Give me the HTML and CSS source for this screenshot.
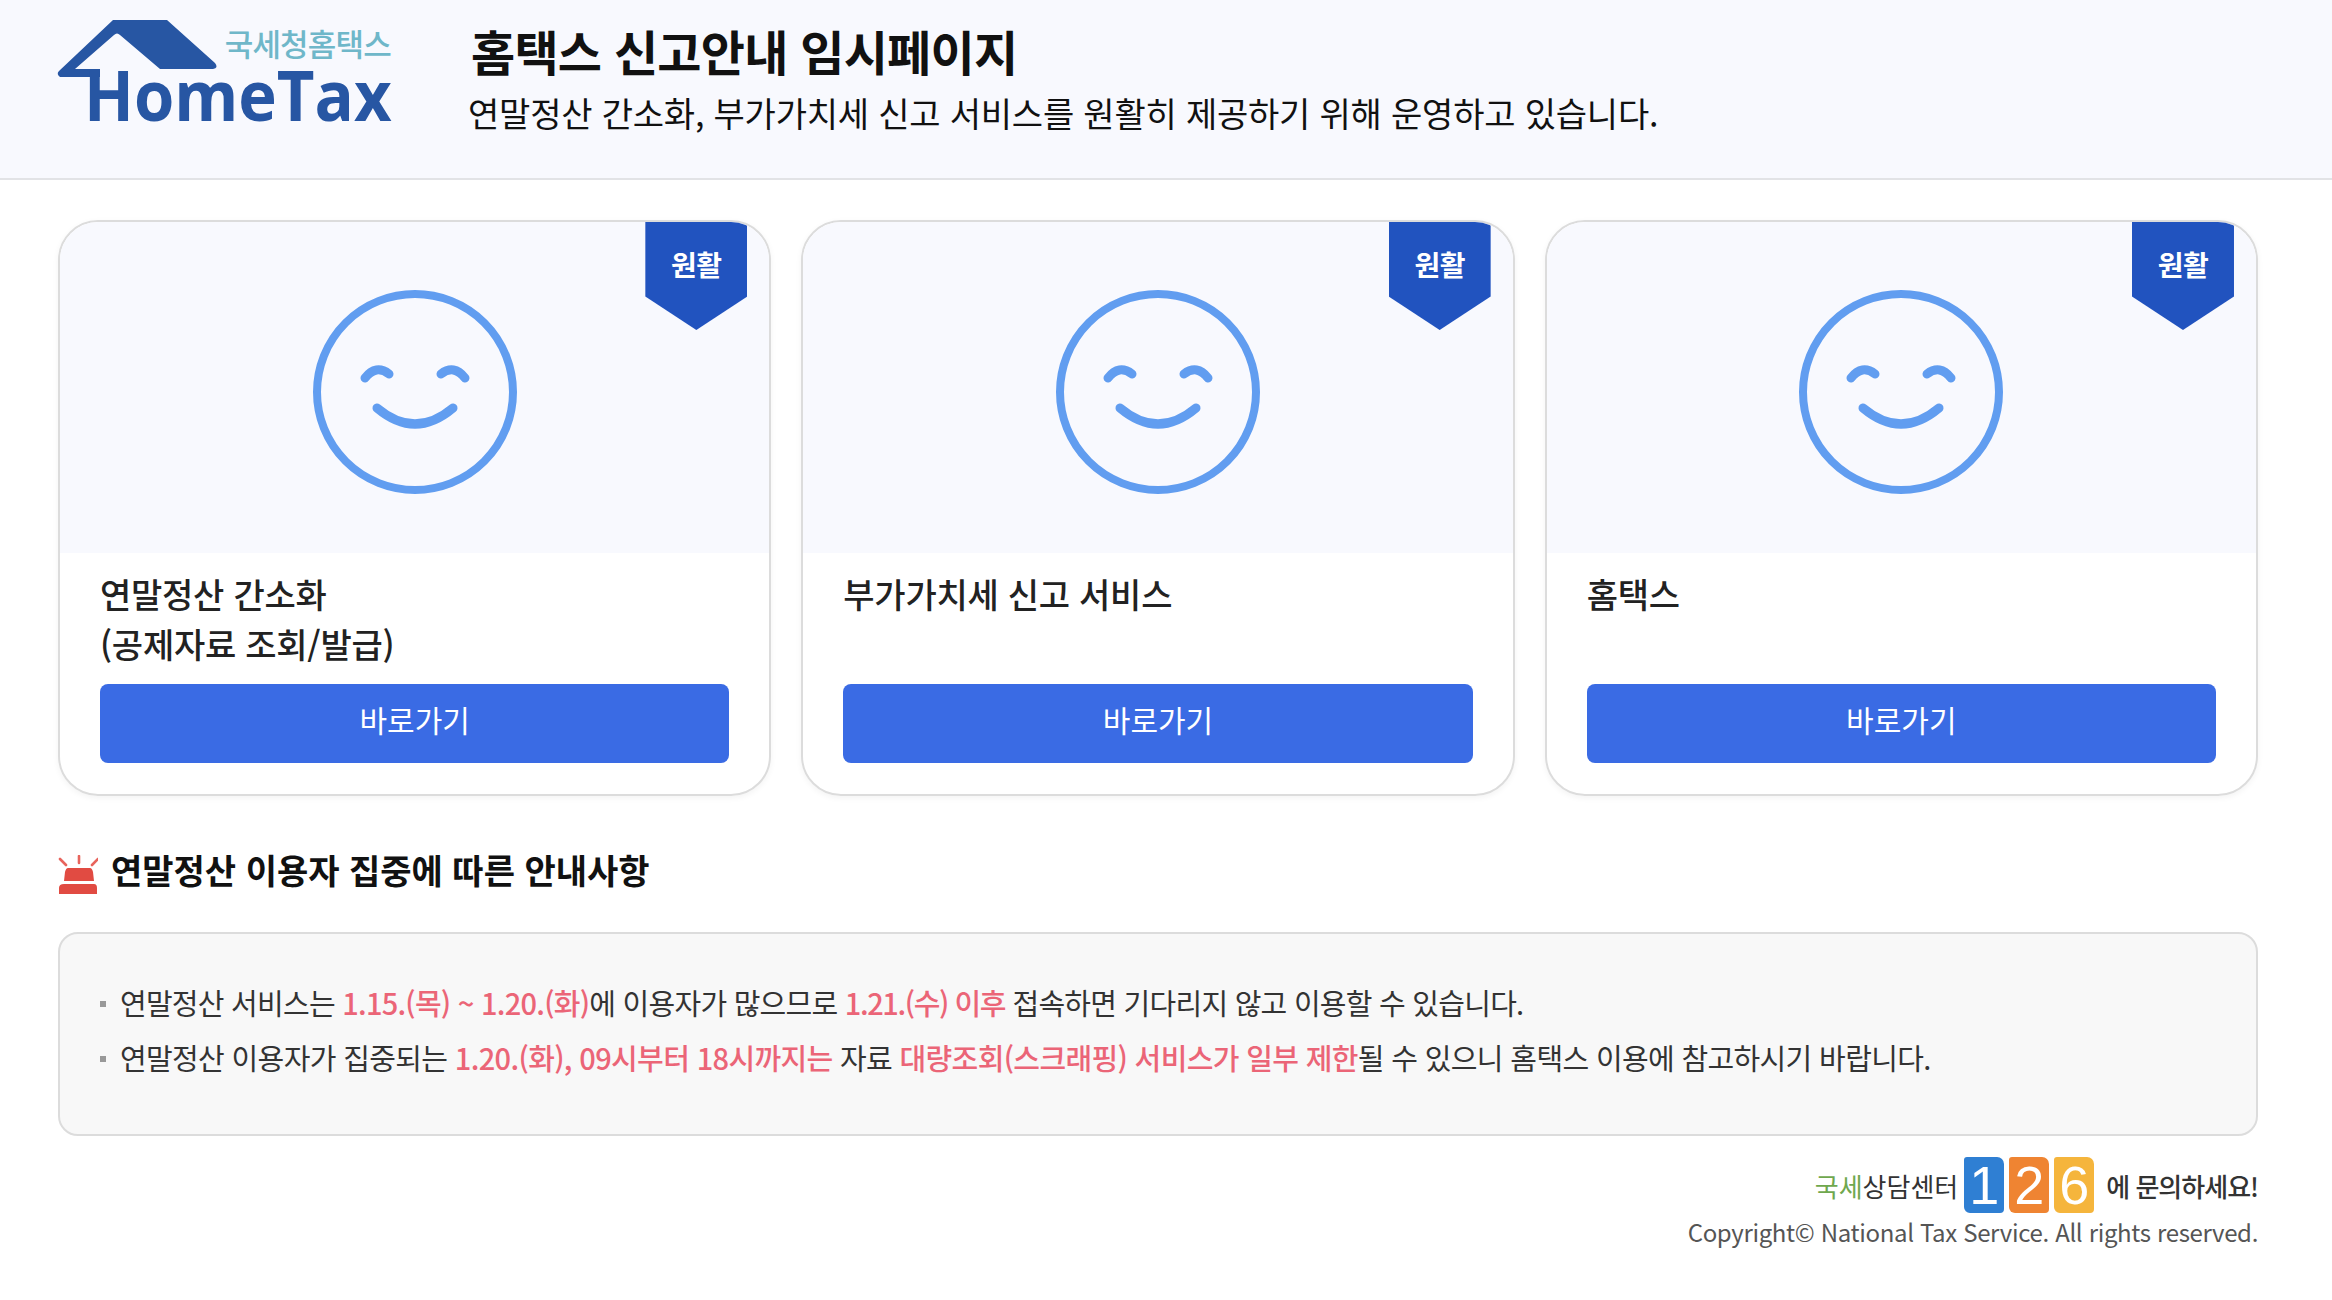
FILE: index.html
```html
<!DOCTYPE html>
<html lang="ko">
<head>
    <meta charset="UTF-8">
    <title>홈택스 신고안내 임시페이지</title>
    <link rel="stylesheet" href="styles.css">
</head>
<body>
    <header class="top">
        <div class="logo">
            <svg class="logo-roof" viewBox="0 0 160 60" width="160" height="60">
                <path d="M55 0 H109 L157 43 Q161 48 155 49 H102 L62 15 Q59 12 56 15 L17 49 H42 V57 H2 Q-2 54 1 51 Z" fill="#2756a3"/>
            </svg>
            <span class="logo-ko">국세청홈택스</span>
            <span class="logo-en">HomeTax</span>
        </div>
        <div class="top-text">
            <h1>홈택스 신고안내 임시페이지</h1>
            <p>연말정산 간소화, 부가가치세 신고 서비스를 원활히 제공하기 위해 운영하고 있습니다.</p>
        </div>
    </header>

    <main class="wrap">
        <section class="cards">
            <div class="card">
                <div class="card-top">
                    <span class="flag">원활</span>
                    <svg class="smile" viewBox="0 0 204 204" width="204" height="204">
                        <circle cx="102" cy="102" r="98" fill="none" stroke="#619df0" stroke-width="8"/>
                        <path d="M52 88 Q63 74 76 84 M128 84 Q141 74 152 88 M64 118 Q102 150 140 118" fill="none" stroke="#619df0" stroke-width="9" stroke-linecap="round"/>
                    </svg>
                </div>
                <div class="card-body">
                    <h2>연말정산 간소화<br>(공제자료 조회/발급)</h2>
                    <a class="go" href="#">바로가기</a>
                </div>
            </div>
            <div class="card">
                <div class="card-top">
                    <span class="flag">원활</span>
                    <svg class="smile" viewBox="0 0 204 204" width="204" height="204">
                        <circle cx="102" cy="102" r="98" fill="none" stroke="#619df0" stroke-width="8"/>
                        <path d="M52 88 Q63 74 76 84 M128 84 Q141 74 152 88 M64 118 Q102 150 140 118" fill="none" stroke="#619df0" stroke-width="9" stroke-linecap="round"/>
                    </svg>
                </div>
                <div class="card-body">
                    <h2>부가가치세 신고 서비스</h2>
                    <a class="go" href="#">바로가기</a>
                </div>
            </div>
            <div class="card">
                <div class="card-top">
                    <span class="flag">원활</span>
                    <svg class="smile" viewBox="0 0 204 204" width="204" height="204">
                        <circle cx="102" cy="102" r="98" fill="none" stroke="#619df0" stroke-width="8"/>
                        <path d="M52 88 Q63 74 76 84 M128 84 Q141 74 152 88 M64 118 Q102 150 140 118" fill="none" stroke="#619df0" stroke-width="9" stroke-linecap="round"/>
                    </svg>
                </div>
                <div class="card-body">
                    <h2>홈택스</h2>
                    <a class="go" href="#">바로가기</a>
                </div>
            </div>
        </section>

        <h3 class="notice-title">
            <svg class="siren" viewBox="0 0 40 40" width="40" height="40">
                <path d="M10 13 H32 Q34 13 35 17 L36 26 H6 L7 17 Q8 13 10 13 Z M6 29 H36 Q39 29 39 33 V39 H1 V33 Q1 29 6 29 Z" fill="#e14b42"/>
                <path d="M21 1 V8 M2 4 L8 10 M40 4 L34 10" stroke="#e8645c" stroke-width="2.6" fill="none" stroke-linecap="round"/>
            </svg>
            연말정산 이용자 집중에 따른 안내사항
        </h3>

        <ul class="notice">
            <li>연말정산 서비스는 <em>1.15.(목) ~ 1.20.(화)</em>에 이용자가 많으므로 <em class="tight">1.21.(수) 이후</em> 접속하면 기다리지 않고 이용할 수 있습니다.</li>
            <li>연말정산 이용자가 집중되는 <em>1.20.(화), 09시부터 18시까지는</em> 자료 <em>대량조회(스크래핑) 서비스가 일부 제한</em>될 수 있으니 홈택스 이용에 참고하시기 바랍니다.</li>
        </ul>

        <footer class="foot">
            <div class="call">
                <span class="call-name"><b>국세</b>상담센터</span>
                <span class="num num-1">1</span><span class="num num-2">2</span><span class="num num-6">6</span>
                <span class="call-text">에 문의하세요!</span>
            </div>
            <p>Copyright© National Tax Service. All rights reserved.</p>
        </footer>
    </main>
</body>
</html>
```

FILE: styles.css
```css
/* 전체 */
* {
    box-sizing: border-box;
}

body {
    margin: 0;
    background-color: #fff;
    color: #111;
    font-family: "Noto Sans CJK KR", "Noto Sans", sans-serif;
}

/* 상단 */
.top {
    display: flex;
    align-items: flex-start;
    height: 180px;
    padding: 20px 58px 0;
    background-color: #f8f9fe;
    border-bottom: 2px solid #e2e3e6;
}

.logo {
    position: relative;
    width: 334px;
    height: 110px;
    flex-shrink: 0;
}

.logo-roof {
    position: absolute;
    left: 0;
    top: 0;
    overflow: visible;
}

.logo-ko {
    position: absolute;
    right: 1px;
    top: 3px;
    color: #6fb7c9;
    font-size: 31px;
    font-weight: 500;
    letter-spacing: -0.8px;
    line-height: 40px;
}

.logo-en {
    position: absolute;
    left: 26px;
    top: 44px;
    color: #2756a3;
    font-family: "Open Sans", sans-serif;
    font-size: 69px;
    font-weight: 700;
    line-height: 60px;
    transform: scaleX(0.945);
    transform-origin: left top;
}

.top-text {
    margin-left: 79px;
}

.top-text h1 {
    margin: -3px 0 0;
    font-size: 48px;
    font-weight: 700;
    letter-spacing: -0.75px;
    line-height: 66px;
}

.top-text p {
    margin: 7px 0 0 -3px;
    font-size: 34px;
    letter-spacing: -0.2px;
    line-height: 46px;
}

.wrap {
    padding: 40px 74px 0 58px;
}

/* 카드 */
.cards {
    display: grid;
    grid-template-columns: repeat(3, 1fr);
    gap: 30px;
}

.card {
    height: 576px;
    border: 2px solid #dcdcdc;
    border-radius: 40px;
    overflow: hidden;
    box-shadow: 0 2px 6px rgba(0, 0, 0, 0.05);
}

.card-top {
    position: relative;
    display: flex;
    align-items: flex-start;
    justify-content: center;
    height: 331px;
    padding-top: 68px;
    background-color: #f8f9fe;
}

.flag {
    position: absolute;
    top: 0;
    right: 22px;
    width: 102px;
    height: 108px;
    padding-top: 22px;
    background-color: #2153bf;
    clip-path: polygon(0 0, 100% 0, 100% 69%, 50% 100%, 0 69%);
    color: #fff;
    font-size: 28px;
    font-weight: 700;
    letter-spacing: -0.5px;
    line-height: 40px;
    text-align: center;
}

.card-body {
    padding: 0 40px;
}

.card-body h2 {
    height: 98px;
    margin: 16px 0 17px;
    font-size: 34px;
    font-weight: 500;
    letter-spacing: -0.25px;
    line-height: 50px;
    color: #222;
}

.go {
    display: block;
    height: 79px;
    background-color: #3a6be4;
    border-radius: 8px;
    color: #fff;
    font-size: 30px;
    line-height: 71px;
    text-align: center;
    text-decoration: none;
}

/* 안내사항 */
.notice-title {
    display: flex;
    align-items: center;
    gap: 13px;
    height: 48px;
    margin: 49px 0 39px;
    font-size: 34px;
    font-weight: 700;
    letter-spacing: 0;
}

.siren {
    margin-top: 12px;
}

.notice {
    height: 204px;
    margin: 0;
    padding: 41px 40px 35px;
    list-style: none;
    background-color: #f8f8f8;
    border: 2px solid #dcdcdc;
    border-radius: 20px;
    color: #333;
    font-size: 29px;
    letter-spacing: -0.75px;
}

.notice li {
    position: relative;
    height: 55px;
    padding-left: 20px;
    line-height: 55px;
}

.notice li + li {
    letter-spacing: -0.65px;
}

.notice li::before {
    content: "";
    position: absolute;
    left: 0;
    top: 26px;
    width: 6px;
    height: 6px;
    background-color: #999;
}

.notice em {
    color: #eb6577;
    font-style: normal;
    font-weight: 500;
}

.notice em.tight {
    letter-spacing: -1.4px;
}

/* 하단 */
.foot {
    margin-top: 19px;
    text-align: right;
    color: #555;
    font-size: 24px;
}

.call {
    display: flex;
    align-items: center;
    justify-content: flex-end;
    height: 60px;
}

.call-name {
    margin-right: 6px;
    font-size: 26px;
    color: #333;
}

.call-name b {
    font-weight: 400;
    color: #6fa84e;
}

.num {
    display: block;
    width: 40px;
    height: 56px;
    margin-right: 5px;
    border-radius: 3px 7px 4px 6px;
    color: #fff;
    font-family: "Liberation Sans", sans-serif;
    font-size: 54px;
    line-height: 56px;
    text-align: center;
}

.num-1 {
    background-color: #2f7fd3;
}

.num-2 {
    background-color: #ef8432;
}

.num-6 {
    background-color: #f5b53c;
}

.call-text {
    margin-left: 7px;
    font-size: 26px;
    font-weight: 500;
    letter-spacing: -1px;
    color: #333;
}

.foot p {
    margin: 0;
    letter-spacing: -0.35px;
    line-height: 34px;
}
```
